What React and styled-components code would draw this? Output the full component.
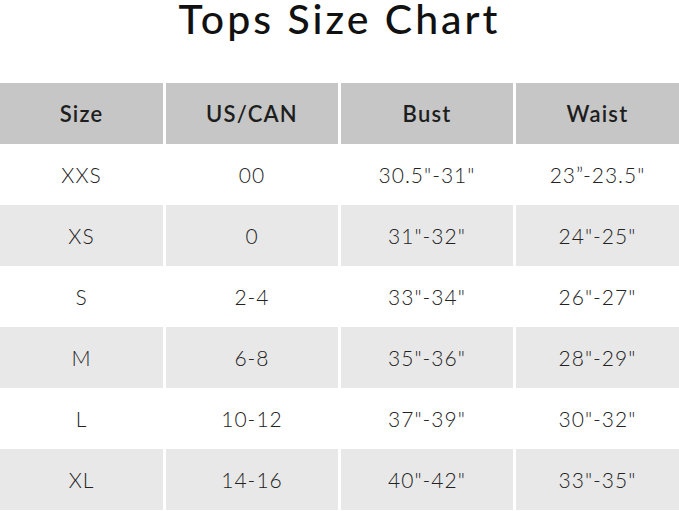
import React from 'react'
import styled, { createGlobalStyle } from 'styled-components'

const GlobalStyle = createGlobalStyle`
  body {
    margin: 0;
    background: #ffffff;
    font-family: Lato, "Open Sans", sans-serif;
    color: #1c1c1c;
  }
`

const columns = ['Size', 'US/CAN', 'Bust', 'Waist']

const sizes = [
  ['XXS', '00', '30.5"-31"', '23”-23.5"'],
  ['XS', '0', '31"-32"', '24"-25"'],
  ['S', '2-4', '33"-34"', '26"-27"'],
  ['M', '6-8', '35"-36"', '28"-29"'],
  ['L', '10-12', '37"-39"', '30"-32"'],
  ['XL', '14-16', '40"-42"', '33"-35"'],
]

const App = () => (
  <Page>
    <GlobalStyle />
    <Title>Tops Size Chart</Title>
    <Table>
      {columns.map(col => (
        <HeadCell key={col}>{col}</HeadCell>
      ))}
      {sizes.map((row, index) =>
        row.map((value, i) => (
          <Cell key={`${index}-${i}`} shaded={index % 2 === 1}>
            {value}
          </Cell>
        ))
      )}
    </Table>
  </Page>
)

export default App

const Page = styled.div`
  width: 679px;
  height: 511px;
  overflow: hidden;
`

const Title = styled.h1`
  margin: 0 0 45px;
  height: 38px;
  text-align: center;
  font-size: 41px;
  line-height: 38px;
  font-weight: 500;
  letter-spacing: 3px;
  color: #111;
`

const Table = styled.div`
  display: grid;
  grid-template-columns: 163px 172px 172px 163px;
  grid-auto-rows: 61px;
  column-gap: 3px;
`

const HeadCell = styled.div`
  display: flex;
  align-items: center;
  justify-content: center;
  background: #c6c6c6;
  font-size: 22px;
  font-weight: 600;
  letter-spacing: 1.2px;
  color: #1e1e1e;
`

const Cell = styled.div`
  display: flex;
  align-items: center;
  justify-content: center;
  background: ${props => (props.shaded ? '#e8e8e8' : '#ffffff')};
  font-size: 21px;
  font-weight: 300;
  letter-spacing: 1px;
  color: #222;
`
